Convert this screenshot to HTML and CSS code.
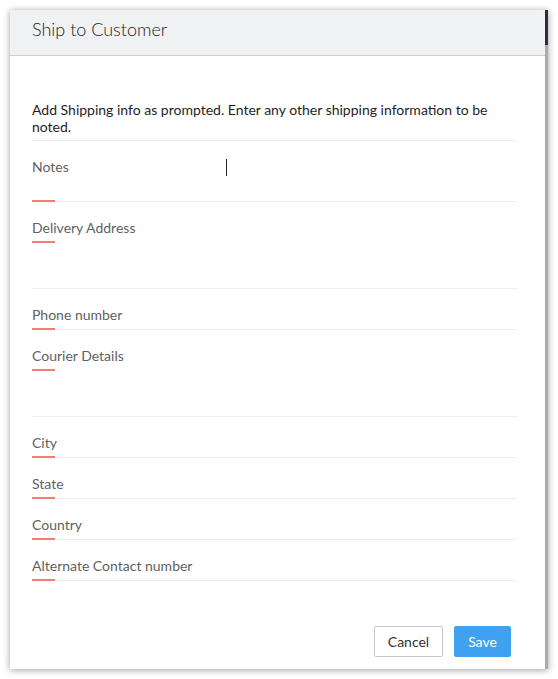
FILE: index.html
```html
<!DOCTYPE html>
<html>
<head>
<meta charset="utf-8">
<title>Ship to Customer</title>
<link rel="stylesheet" href="styles.css">
</head>
<body>
<div class="modal">
  <div class="main">
    <div class="header"><h1 class="title">Ship to Customer</h1></div>
    <div class="content">
      <p class="desc">Add Shipping info as prompted. Enter any other shipping information to be noted.</p>
      <div class="field">
        <div class="notes-row">
          <div class="label notes-label">Notes</div>
          <div class="notes-input"><span class="caret"></span></div>
        </div>
        <div class="accent"></div>
      </div>
      <div class="field">
        <div class="label">Delivery Address</div>
        <div class="accent"></div>
        <div class="area"></div>
      </div>
      <div class="field">
        <div class="label">Phone number</div>
        <div class="accent"></div>
      </div>
      <div class="field">
        <div class="label">Courier Details</div>
        <div class="accent"></div>
        <div class="area"></div>
      </div>
      <div class="field">
        <div class="label">City</div>
        <div class="accent"></div>
      </div>
      <div class="field">
        <div class="label">State</div>
        <div class="accent"></div>
      </div>
      <div class="field">
        <div class="label">Country</div>
        <div class="accent"></div>
      </div>
      <div class="field">
        <div class="label">Alternate Contact number</div>
        <div class="accent"></div>
      </div>
    </div>
    <div class="footer">
      <button class="btn btn-cancel">Cancel</button>
      <button class="btn btn-save">Save</button>
    </div>
  </div>
  <div class="scrollbar"><div class="thumb"></div></div>
</div>
</body>
</html>
```

FILE: styles.css
```css
* { box-sizing: border-box; }
html, body { margin: 0; background: #ffffff; }
body {
  padding: 10px;
  font-family: Lato, "Open Sans", "Liberation Sans", sans-serif;
  color: #222;
}
.modal {
  width: 538px;
  height: 659px;
  display: flex;
  background: #fff;
  box-shadow: 0 1px 7px rgba(0, 0, 0, 0.38);
}
.main {
  flex: 1;
  display: flex;
  flex-direction: column;
  min-width: 0;
}
.header {
  background: #f0f1f3;
  border-bottom: 1px solid #cfd0d2;
  height: 46px;
  padding: 8px 22px 0;
}
.title {
  margin: 0;
  font-size: 18px;
  font-weight: 300;
  line-height: 22px;
  color: #222;
}
.content {
  flex: 1;
  padding: 45px 28px 0 22px;
}
.desc {
  margin: 0;
  font-size: 14px;
  line-height: 17px;
  color: #1e1e1e;
  padding-bottom: 5px;
  border-bottom: 1px solid #ececec;
}
.field {
  padding-top: 16px;
  border-bottom: 1px solid #ececec;
}
.label {
  font-size: 14px;
  line-height: 20px;
  color: #5f5f5f;
}
.accent {
  width: 23px;
  height: 2px;
  margin-top: 3px;
  margin-bottom: -1px;
  background: #f47b76;
}
.area {
  height: 46px;
}
.notes-row {
  display: flex;
  height: 40px;
}
.notes-label { width: 194px; }
.notes-input { flex: 1; padding-top: 2px; }
.caret {
  display: block;
  width: 1px;
  height: 17px;
  background: #222;
}
.footer {
  display: flex;
  justify-content: flex-end;
  gap: 11px;
  padding: 0 34px 12px;
}
.btn {
  height: 31px;
  border-radius: 2px;
  font-family: inherit;
  font-size: 14px;
  padding: 0;
  cursor: pointer;
}
.btn-cancel {
  width: 69px;
  background: #fff;
  border: 1px solid #c8c8c8;
  color: #333;
}
.btn-save {
  width: 57px;
  background: #3fa1f0;
  border: 1px solid #3fa1f0;
  color: #fff;
}
.scrollbar {
  width: 3px;
  background: #ababab;
}
.thumb {
  height: 35px;
  background: #2c2f3a;
}
```
